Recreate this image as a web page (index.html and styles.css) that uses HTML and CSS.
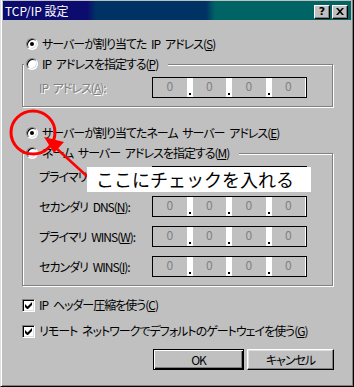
FILE: index.html
```html
<!DOCTYPE html>
<html lang="ja">
<head>
    <meta charset="UTF-8">
    <title>TCP/IP 設定</title>
    <link rel="stylesheet" href="styles.css">
</head>
<body>
    <div class="window">
        <div class="titlebar">
            <span class="title">TCP/IP 設定</span>
            <div class="tb-buttons">
                <span class="tb-btn help">?</span>
                <span class="tb-btn close">
                    <svg width="8" height="7" viewBox="0 0 8 7"><path d="M0 0h2l2 2.2L6 0h2L5 3.5 8 7H6L4 4.8 2 7H0l3-3.5z" fill="#000"/></svg>
                </span>
            </div>
        </div>

        <div class="content">
            <div class="option radio-row">
                <span class="radio checked"></span>
                <span>サーバーが割り当てた IP アドレス(<u>S</u>)</span>
            </div>

            <fieldset class="group group-ip">
                <legend class="option"><span class="radio"></span><span>IP アドレスを指定する(<u>P</u>)</span></legend>
                <div class="field-row">
                    <span class="label disabled">IP アドレス(<u>A</u>):</span>
                    <div class="ipbox">
                        <span class="seg">0</span><span class="dot"></span>
                        <span class="seg">0</span><span class="dot"></span>
                        <span class="seg">0</span><span class="dot"></span>
                        <span class="seg">0</span>
                    </div>
                </div>
            </fieldset>

            <div class="option radio-row row-ns">
                <span class="radio checked"></span>
                <span>サーバーが割り当てたネーム サーバー アドレス(<u>E</u>)</span>
            </div>

            <fieldset class="group group-ns">
                <legend class="option"><span class="radio"></span><span>ネーム サーバー アドレスを指定する(<u>M</u>)</span></legend>
                <div class="field-row">
                    <span class="label">プライマリ DNS(<u>D</u>):</span>
                    <div class="ipbox">
                        <span class="seg">0</span><span class="dot"></span>
                        <span class="seg">0</span><span class="dot"></span>
                        <span class="seg">0</span><span class="dot"></span>
                        <span class="seg">0</span>
                    </div>
                </div>
                <div class="field-row">
                    <span class="label">セカンダリ DNS(<u>N</u>):</span>
                    <div class="ipbox">
                        <span class="seg">0</span><span class="dot"></span>
                        <span class="seg">0</span><span class="dot"></span>
                        <span class="seg">0</span><span class="dot"></span>
                        <span class="seg">0</span>
                    </div>
                </div>
                <div class="field-row">
                    <span class="label">プライマリ WINS(<u>W</u>):</span>
                    <div class="ipbox">
                        <span class="seg">0</span><span class="dot"></span>
                        <span class="seg">0</span><span class="dot"></span>
                        <span class="seg">0</span><span class="dot"></span>
                        <span class="seg">0</span>
                    </div>
                </div>
                <div class="field-row">
                    <span class="label">セカンダリ WINS(<u>I</u>):</span>
                    <div class="ipbox">
                        <span class="seg">0</span><span class="dot"></span>
                        <span class="seg">0</span><span class="dot"></span>
                        <span class="seg">0</span><span class="dot"></span>
                        <span class="seg">0</span>
                    </div>
                </div>
            </fieldset>

            <div class="option check-row first-check">
                <span class="checkbox"><svg width="7" height="7" viewBox="0 0 7 7"><path d="M0 2v3l2 2h1l4-4V0L2.5 4.5z" fill="#000"/></svg></span>
                <span>IP ヘッダー圧縮を使う(<u>C</u>)</span>
            </div>
            <div class="option check-row">
                <span class="checkbox"><svg width="7" height="7" viewBox="0 0 7 7"><path d="M0 2v3l2 2h1l4-4V0L2.5 4.5z" fill="#000"/></svg></span>
                <span>リモート ネットワークでデフォルトのゲートウェイを使う(<u>G</u>)</span>
            </div>

            <div class="buttons">
                <span class="btn default">OK</span>
                <span class="btn">キャンセル</span>
            </div>
        </div>

        <!-- annotation drawn over the dialog -->
        <svg class="marker" width="354" height="387" viewBox="0 0 354 387">
            <ellipse cx="32" cy="132.5" rx="22" ry="21.5" fill="none" stroke="#ff0000" stroke-width="3"/>
            <line x1="88" y1="178" x2="55" y2="148" stroke="#ff0000" stroke-width="2.5"/>
            <polygon points="43,137 63,142 53,153" fill="#ff0000"/>
        </svg>
        <div class="callout">ここにチェックを入れる</div>
    </div>
</body>
</html>
```

FILE: styles.css
```css
body {
    margin: 0;
    background: #c0c0c0;
    font-family: "Noto Sans CJK JP", "Noto Sans", sans-serif;
    font-size: 12px;
    line-height: 16px;
    color: #000;
}

.window {
    position: relative;
    width: 354px;
    height: 387px;
    box-sizing: border-box;
    background: #c0c0c0;
    border-left: 1px solid #dfdfdf;
    border-right: 1px solid #000;
    border-bottom: 1px solid #000;
    box-shadow: inset 1px 0 #fff, inset -1px -1px #808080;
    padding: 1px 2px 0 2px;
}

.titlebar {
    height: 19px;
    display: flex;
    align-items: center;
    justify-content: space-between;
    padding: 0 3px 0 2px;
    background: linear-gradient(to right, #0c0c6e 0, #0c0c6e 84px, #003264 93px, #003264 203px, #006464 212px, #006464 100%);
}

.title {
    color: #fff;
    font-feature-settings: "palt";
}

.tb-buttons {
    display: flex;
    gap: 2px;
    margin-top: 2px;
}

.tb-btn {
    width: 16px;
    height: 14px;
    box-sizing: border-box;
    background: #c0c0c0;
    border: 1px solid;
    border-color: #fff #000 #000 #fff;
    box-shadow: inset -1px -1px #808080;
    display: flex;
    align-items: center;
    justify-content: center;
    font-family: "DejaVu Sans", sans-serif;
    font-weight: bold;
    font-size: 11px;
    line-height: 12px;
}

.content {
    padding: 0 17px 0 19px;
}

.option {
    display: flex;
    align-items: center;
    height: 16px;
    font-feature-settings: "palt";
    letter-spacing: -1px;
    word-spacing: 3px;
    white-space: nowrap;
}

.radio-row {
    margin: 16px 0 0 4px;
}

.row-ns {
    margin-top: 18px;
}

.radio {
    position: relative;
    width: 12px;
    height: 12px;
    box-sizing: border-box;
    border-radius: 50%;
    background: #fff;
    border: 1px solid;
    border-color: #808080 #fff #fff #808080;
    box-shadow: inset 1px 1px #000, inset -1px -1px #dfdfdf;
    margin-right: 4px;
    flex: none;
}

.radio.checked::after {
    content: "";
    position: absolute;
    left: 3px;
    top: 3px;
    width: 4px;
    height: 4px;
    border-radius: 50%;
    background: #000;
}

.group {
    margin: 4px 1px 0 0;
    padding: 5px 0 8px 0;
    border: 1px solid #808080;
    box-shadow: 1px 1px 0 #fff, inset 1px 1px 0 #fff;
}

.group legend {
    margin-left: 1px;
    padding: 0 10px 0 2px;
    background: #c0c0c0;
}

.field-row {
    display: flex;
    align-items: center;
    height: 21px;
    padding-left: 16px;
}

.group-ns .field-row + .field-row {
    margin-top: 9px;
}

.label {
    width: 113px;
    font-feature-settings: "palt";
    letter-spacing: -1px;
    word-spacing: 3px;
    white-space: nowrap;
}

.label.disabled {
    color: #808080;
    text-shadow: 1px 1px 0 #fff;
}

.ipbox {
    display: flex;
    width: 155px;
    height: 21px;
    box-sizing: border-box;
    border: 1px solid #000;
    background: #fff;
    padding-right: 1px;
}

.seg {
    flex: 1;
    background: #c0c0c0;
    color: #808080;
    text-align: center;
    line-height: 15px;
}

.dot {
    width: 6px;
    display: flex;
    align-items: flex-end;
    padding: 0 0 2px 2px;
    box-sizing: border-box;
}

.dot::after {
    content: "";
    width: 2px;
    height: 2px;
    background: #000;
}

.check-row {
    margin-top: 10px;
}

.first-check {
    margin-top: 11px;
}

.checkbox {
    width: 13px;
    height: 13px;
    box-sizing: border-box;
    background: #fff;
    border: 1px solid;
    border-color: #808080 #fff #fff #808080;
    box-shadow: inset 1px 1px #000, inset -1px -1px #dfdfdf;
    display: flex;
    align-items: center;
    justify-content: center;
    margin-right: 4px;
    flex: none;
}

.buttons {
    display: flex;
    justify-content: flex-end;
    gap: 3px;
    margin-top: 10px;
}

.btn {
    width: 87px;
    height: 21px;
    box-sizing: border-box;
    background: #c0c0c0;
    border: 1px solid;
    border-color: #fff #000 #000 #fff;
    box-shadow: inset -1px -1px #808080, inset 1px 1px #dfdfdf;
    display: flex;
    align-items: center;
    justify-content: center;
    font-feature-settings: "palt";
    letter-spacing: -1px;
}

.btn.default {
    width: 91px;
    border-color: #000;
    box-shadow: inset 1px 1px #fff, inset -1px -1px #000, inset -2px -2px #808080;
}

.marker {
    position: absolute;
    left: 0;
    top: 0;
    pointer-events: none;
}

.callout {
    position: absolute;
    left: 86px;
    top: 167px;
    width: 224px;
    height: 25px;
    box-sizing: border-box;
    background: #fff;
    padding-left: 9px;
    font-size: 18px;
    line-height: 25px;
    white-space: nowrap;
}
```
